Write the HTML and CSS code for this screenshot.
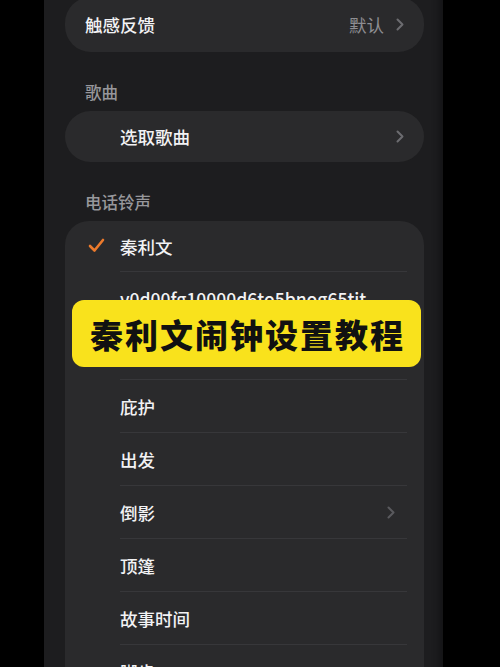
FILE: index.html
```html
<!DOCTYPE html>
<html lang="zh-CN">
<head>
    <meta charset="UTF-8">
    <meta name="viewport" content="width=device-width, initial-scale=1.0">
    <title>闹钟 - 声音</title>
    <link rel="stylesheet" href="styles.css">
</head>
<body>
    <div class="screen">
        <div class="card card-top">
            <span class="row-label">触感反馈</span>
            <span class="row-value">默认</span>
            <svg class="chevron" width="8" height="13" viewBox="0 0 8 13"><path d="M1.5 1.5 L6.5 6.5 L1.5 11.5" fill="none" stroke="currentColor" stroke-width="2" stroke-linecap="round" stroke-linejoin="round"/></svg>
        </div>

        <h2 class="section-title">歌曲</h2>
        <div class="card">
            <span class="row-label indent">选取歌曲</span>
            <svg class="chevron" width="8" height="13" viewBox="0 0 8 13"><path d="M1.5 1.5 L6.5 6.5 L1.5 11.5" fill="none" stroke="currentColor" stroke-width="2" stroke-linecap="round" stroke-linejoin="round"/></svg>
        </div>

        <h2 class="section-title">电话铃声</h2>
        <ul class="tone-list">
            <li class="tone first">
                <svg class="check" width="17" height="15" viewBox="0 0 17 15"><path d="M2 8 L6.5 12.5 L15 2" fill="none" stroke="#ec7a2c" stroke-width="2.6" stroke-linecap="round" stroke-linejoin="round"/></svg>
                <span>秦利文</span>
            </li>
            <li class="tone tall"><span>v0d00fg10000d6to5bnog65tit</span></li>
            <li class="tone tall"></li>
            <li class="tone"><span>庇护</span></li>
            <li class="tone"><span>出发</span></li>
            <li class="tone">
                <span>倒影</span>
                <svg class="chevron dim" width="8" height="13" viewBox="0 0 8 13"><path d="M1.5 1.5 L6.5 6.5 L1.5 11.5" fill="none" stroke="currentColor" stroke-width="2" stroke-linecap="round" stroke-linejoin="round"/></svg>
            </li>
            <li class="tone"><span>顶篷</span></li>
            <li class="tone"><span>故事时间</span></li>
            <li class="tone"><span>脚步</span></li>
        </ul>
    </div>

    <div class="banner">秦利文闹钟设置教程</div>
</body>
</html>
```

FILE: styles.css
```css
body {
    margin: 0;
    padding: 0;
    background-color: #000;
    font-family: "Noto Sans CJK SC", "Noto Sans", sans-serif;
    color: #f2f2f4;
    height: 667px;
    overflow: hidden;
    position: relative;
}
.screen {
    margin-left: 44px;
    width: 399px;
    height: 667px;
    box-sizing: border-box;
    padding: 0 19px 0 21px;
    background-color: #1d1d1f;
    box-shadow: inset -12px 0 6px -8px #141416;
    overflow: hidden;
}
.card {
    display: flex;
    align-items: center;
    height: 51px;
    padding: 0 20px;
    background-color: #2a2a2c;
    border-radius: 26px;
}
.card-top {
    height: 55px;
    margin-top: -3px;
}
.row-label {
    font-size: 17.5px;
    font-weight: 500;
    flex: 1;
}
.row-label.indent {
    padding-left: 35px;
}
.row-value {
    font-size: 17.5px;
    color: #8e8e92;
    margin-right: 12px;
}
.chevron {
    color: #6c6c70;
    display: block;
}
.chevron.dim {
    color: #5a5a5e;
    margin-right: 12px;
}
.section-title {
    margin: 0;
    height: 59px;
    box-sizing: border-box;
    padding: 29px 0 0 20px;
    font-size: 16.5px;
    font-weight: 500;
    line-height: 22px;
    color: #97979b;
}
.tone-list {
    list-style: none;
    margin: 0;
    padding: 0;
    background-color: #2a2a2c;
    border-radius: 24px 24px 0 0;
}
.tone {
    display: flex;
    align-items: center;
    height: 52px;
    margin-left: 55px;
    margin-right: 17px;
    border-bottom: 1px solid #37373a;
    font-size: 17.5px;
    font-weight: 500;
    position: relative;
}
.tone span {
    flex: 1;
}
.tone.first {
    height: 50px;
}
.tone.tall {
    height: 53px;
}
.check {
    position: absolute;
    left: -32px;
    top: 17px;
}
.banner {
    position: absolute;
    left: 72px;
    top: 300px;
    width: 349px;
    height: 67px;
    box-sizing: border-box;
    padding-left: 2px;
    background-color: #f9e21c;
    border-radius: 12px;
    color: #111;
    font-family: "Noto Sans CJK SC", sans-serif;
    font-weight: 900;
    font-size: 33px;
    letter-spacing: 2px;
    display: flex;
    align-items: center;
    justify-content: center;
}
```
